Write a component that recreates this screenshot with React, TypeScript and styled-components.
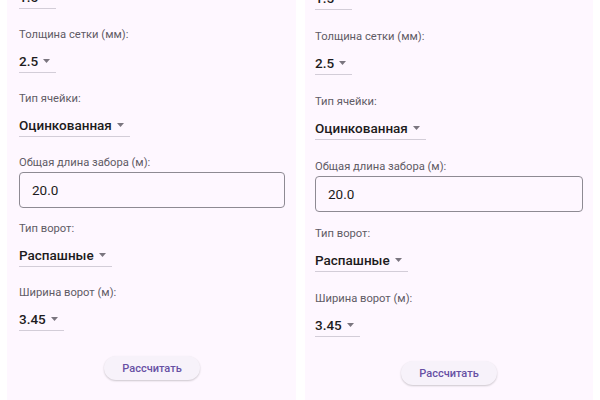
import React from "react";
import styled, { createGlobalStyle } from "styled-components";

const GlobalStyle = createGlobalStyle`
  html, body {
    margin: 0;
    padding: 0;
    background: #ffffff;
  }
  body {
    font-family: Roboto, "Noto Sans", sans-serif;
    -webkit-font-smoothing: antialiased;
  }
`;

const Page = styled.div`
  display: flex;
  gap: 9px;
  padding: 0 7px;
  height: 400px;
  overflow: hidden;
  background: #ffffff;
`;

const Panel = styled.section<{ $w: number; $pl: number; $pr: number }>`
  flex: 0 0 ${(p) => p.$w}px;
  box-sizing: border-box;
  padding: 0 ${(p) => p.$pr}px 0 ${(p) => p.$pl}px;
  background: #fef7ff;
  overflow: hidden;
`;

const Form = styled.div<{ $top: number }>`
  display: flex;
  flex-direction: column;
  margin-top: ${(p) => p.$top}px;
`;

const Field = styled.div<{ $mb: number }>`
  display: flex;
  flex-direction: column;
  align-items: flex-start;
  margin-bottom: ${(p) => p.$mb}px;
`;

const Label = styled.div<{ $gap: number }>`
  font-size: 11.2px;
  line-height: 16px;
  color: #5f5b65;
  margin-bottom: ${(p) => p.$gap}px;
`;

const Select = styled.div`
  display: inline-flex;
  align-items: center;
  height: 23px;
  padding-top: 1px;
  border-bottom: 1px solid #d3cdd8;
  font-size: 13.5px;
  font-weight: 500;
  color: #1d1b20;
`;

const Caret = styled.svg`
  width: 7px;
  height: 4px;
  margin: 0 6px 0 5px;
  flex: none;
`;

const TextBox = styled.input`
  box-sizing: border-box;
  width: 100%;
  height: 36px;
  margin: 0;
  padding: 0 12px;
  border: 1px solid #8e8a93;
  border-radius: 4px;
  background: transparent;
  font-family: Roboto, "Noto Sans", sans-serif;
  font-size: 13.5px;
  color: #1d1b20;
  outline: none;
`;

const Button = styled.button<{ $mt: number }>`
  align-self: center;
  margin-top: ${(p) => p.$mt}px;
  width: 96px;
  height: 24px;
  border: none;
  border-radius: 12px;
  background: #f7f2fa;
  box-shadow: 0 1px 2px rgba(0, 0, 0, 0.2);
  font-family: Roboto, "Noto Sans", sans-serif;
  font-size: 11px;
  font-weight: 500;
  color: #6750a4;
  padding: 0;
`;

type Item =
  | { kind: "select"; label?: string; value: string }
  | { kind: "text"; label: string; value: string };

const items: Item[] = [
  { kind: "select", value: "1.5" },
  { kind: "select", label: "Толщина сетки (мм):", value: "2.5" },
  { kind: "select", label: "Тип ячейки:", value: "Оцинкованная" },
  { kind: "text", label: "Общая длина забора (м):", value: "20.0" },
  { kind: "select", label: "Тип ворот:", value: "Распашные" },
  { kind: "select", label: "Ширина ворот (м):", value: "3.45" },
];

const DropValue: React.FC<{ value: string }> = ({ value }) => (
  <Select>
    {value}
    <Caret viewBox="0 0 7 4">
      <path d="M0 0 L7 0 L3.5 4 Z" fill="#7a757f" />
    </Caret>
  </Select>
);

const Calculator: React.FC<{ top: number; gap: number; buttonGap: number }> = ({
  top,
  gap,
  buttonGap,
}) => (
  <Form $top={top}>
    {items.map((it, i) => (
      <Field key={i} $mb={it.kind === "text" ? gap - 5 : gap}>
        {it.label && <Label $gap={it.kind === "text" ? 1 : 5}>{it.label}</Label>}
        {it.kind === "select" ? (
          <DropValue value={it.value} />
        ) : (
          <TextBox readOnly defaultValue={it.value} />
        )}
      </Field>
    ))}
    <Button $mt={buttonGap}>Рассчитать</Button>
  </Form>
);

export default function App() {
  return (
    <>
      <GlobalStyle />
      <Page>
        <Panel $w={289} $pl={12} $pr={11}>
          <Calculator top={-16} gap={18} buttonGap={7} />
        </Panel>
        <Panel $w={288} $pl={10} $pr={10}>
          <Calculator top={-15} gap={19} buttonGap={5} />
        </Panel>
      </Page>
    </>
  );
}
